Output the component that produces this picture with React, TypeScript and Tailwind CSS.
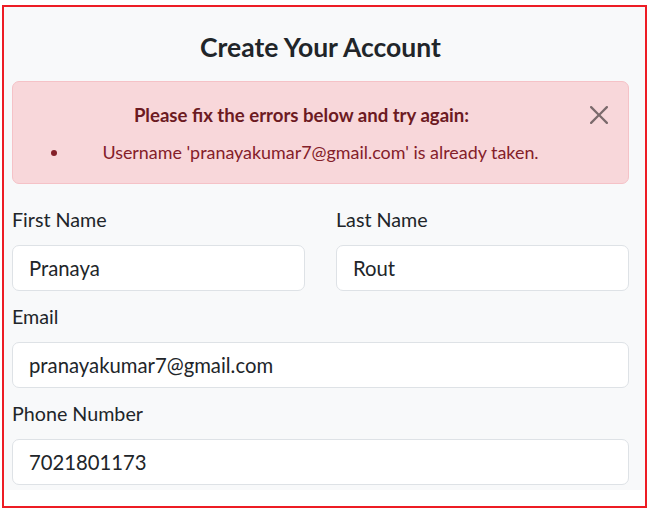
import { useState } from "react";

function CloseIcon() {
  return (
    <svg viewBox="0 0 16 16" className="h-[18px] w-[18px]" fill="currentColor">
      <path d="M.293.293a1 1 0 0 1 1.414 0L8 6.586 14.293.293a1 1 0 1 1 1.414 1.414L9.414 8l6.293 6.293a1 1 0 0 1-1.414 1.414L8 9.414l-6.293 6.293a1 1 0 0 1-1.414-1.414L6.586 8 .293 1.707a1 1 0 0 1 0-1.414z" />
    </svg>
  );
}

function Field({ label, value, onChange }: { label: string; value: string; onChange: (v: string) => void }) {
  return (
    <div>
      <label className="block h-[28px] text-[19.7px] leading-[28px] text-[#212529]">{label}</label>
      <input
        value={value}
        onChange={(e) => onChange(e.target.value)}
        className="mt-[11px] block h-[46px] w-full rounded-[7px] border border-[#dee2e6] bg-white px-[16px] text-[20.3px] text-[#212529] focus:outline-none"
      />
    </div>
  );
}

function App() {
  const [firstName, setFirstName] = useState("Pranaya");
  const [lastName, setLastName] = useState("Rout");
  const [email, setEmail] = useState("pranayakumar7@gmail.com");
  const [phone, setPhone] = useState("7021801173");
  const [showAlert, setShowAlert] = useState(true);

  return (
    <div className="h-[512px] w-[648px] overflow-hidden bg-white pl-[2px] pt-[5px] font-['Lato','Liberation_Sans',sans-serif]">
      <div className="h-[503px] w-[645px] border-2 border-[#ed1c24] bg-white">
        <div className="h-[483px] bg-[#f8f9fa] pl-[8px] pr-[16px] pt-[24px]">
          <h2 className="h-[32px] text-center text-[26.5px] font-bold leading-[32px] text-[#212529]">Create Your Account</h2>

          {showAlert ? (
            <div className="relative mt-[18px] h-[103px] rounded-[7px] border border-[#f5c2c7] bg-[#f8d7da] pl-[19px] pr-[57px] pt-[21px] text-[#842029]">
              <p className="text-center text-[18.6px] font-bold leading-[24px] text-[#6c1a22]">Please fix the errors below and try again:</p>
              <ul className="mt-[13px] list-disc pl-[38px] text-center text-[17.9px] leading-[24px]">
                <li>Username 'pranayakumar7@gmail.com' is already taken.</li>
              </ul>
              <button onClick={() => setShowAlert(false)} className="absolute right-[20px] top-[24px] text-black opacity-50">
                <CloseIcon />
              </button>
            </div>
          ) : null}

          <div className="mt-[22px] grid grid-cols-2 gap-x-[31px]">
            <Field label="First Name" value={firstName} onChange={setFirstName} />
            <Field label="Last Name" value={lastName} onChange={setLastName} />
          </div>
          <div className="mt-[12px]">
            <Field label="Email" value={email} onChange={setEmail} />
          </div>
          <div className="mt-[12px]">
            <Field label="Phone Number" value={phone} onChange={setPhone} />
          </div>
        </div>
      </div>
    </div>
  );
}

export default App;
